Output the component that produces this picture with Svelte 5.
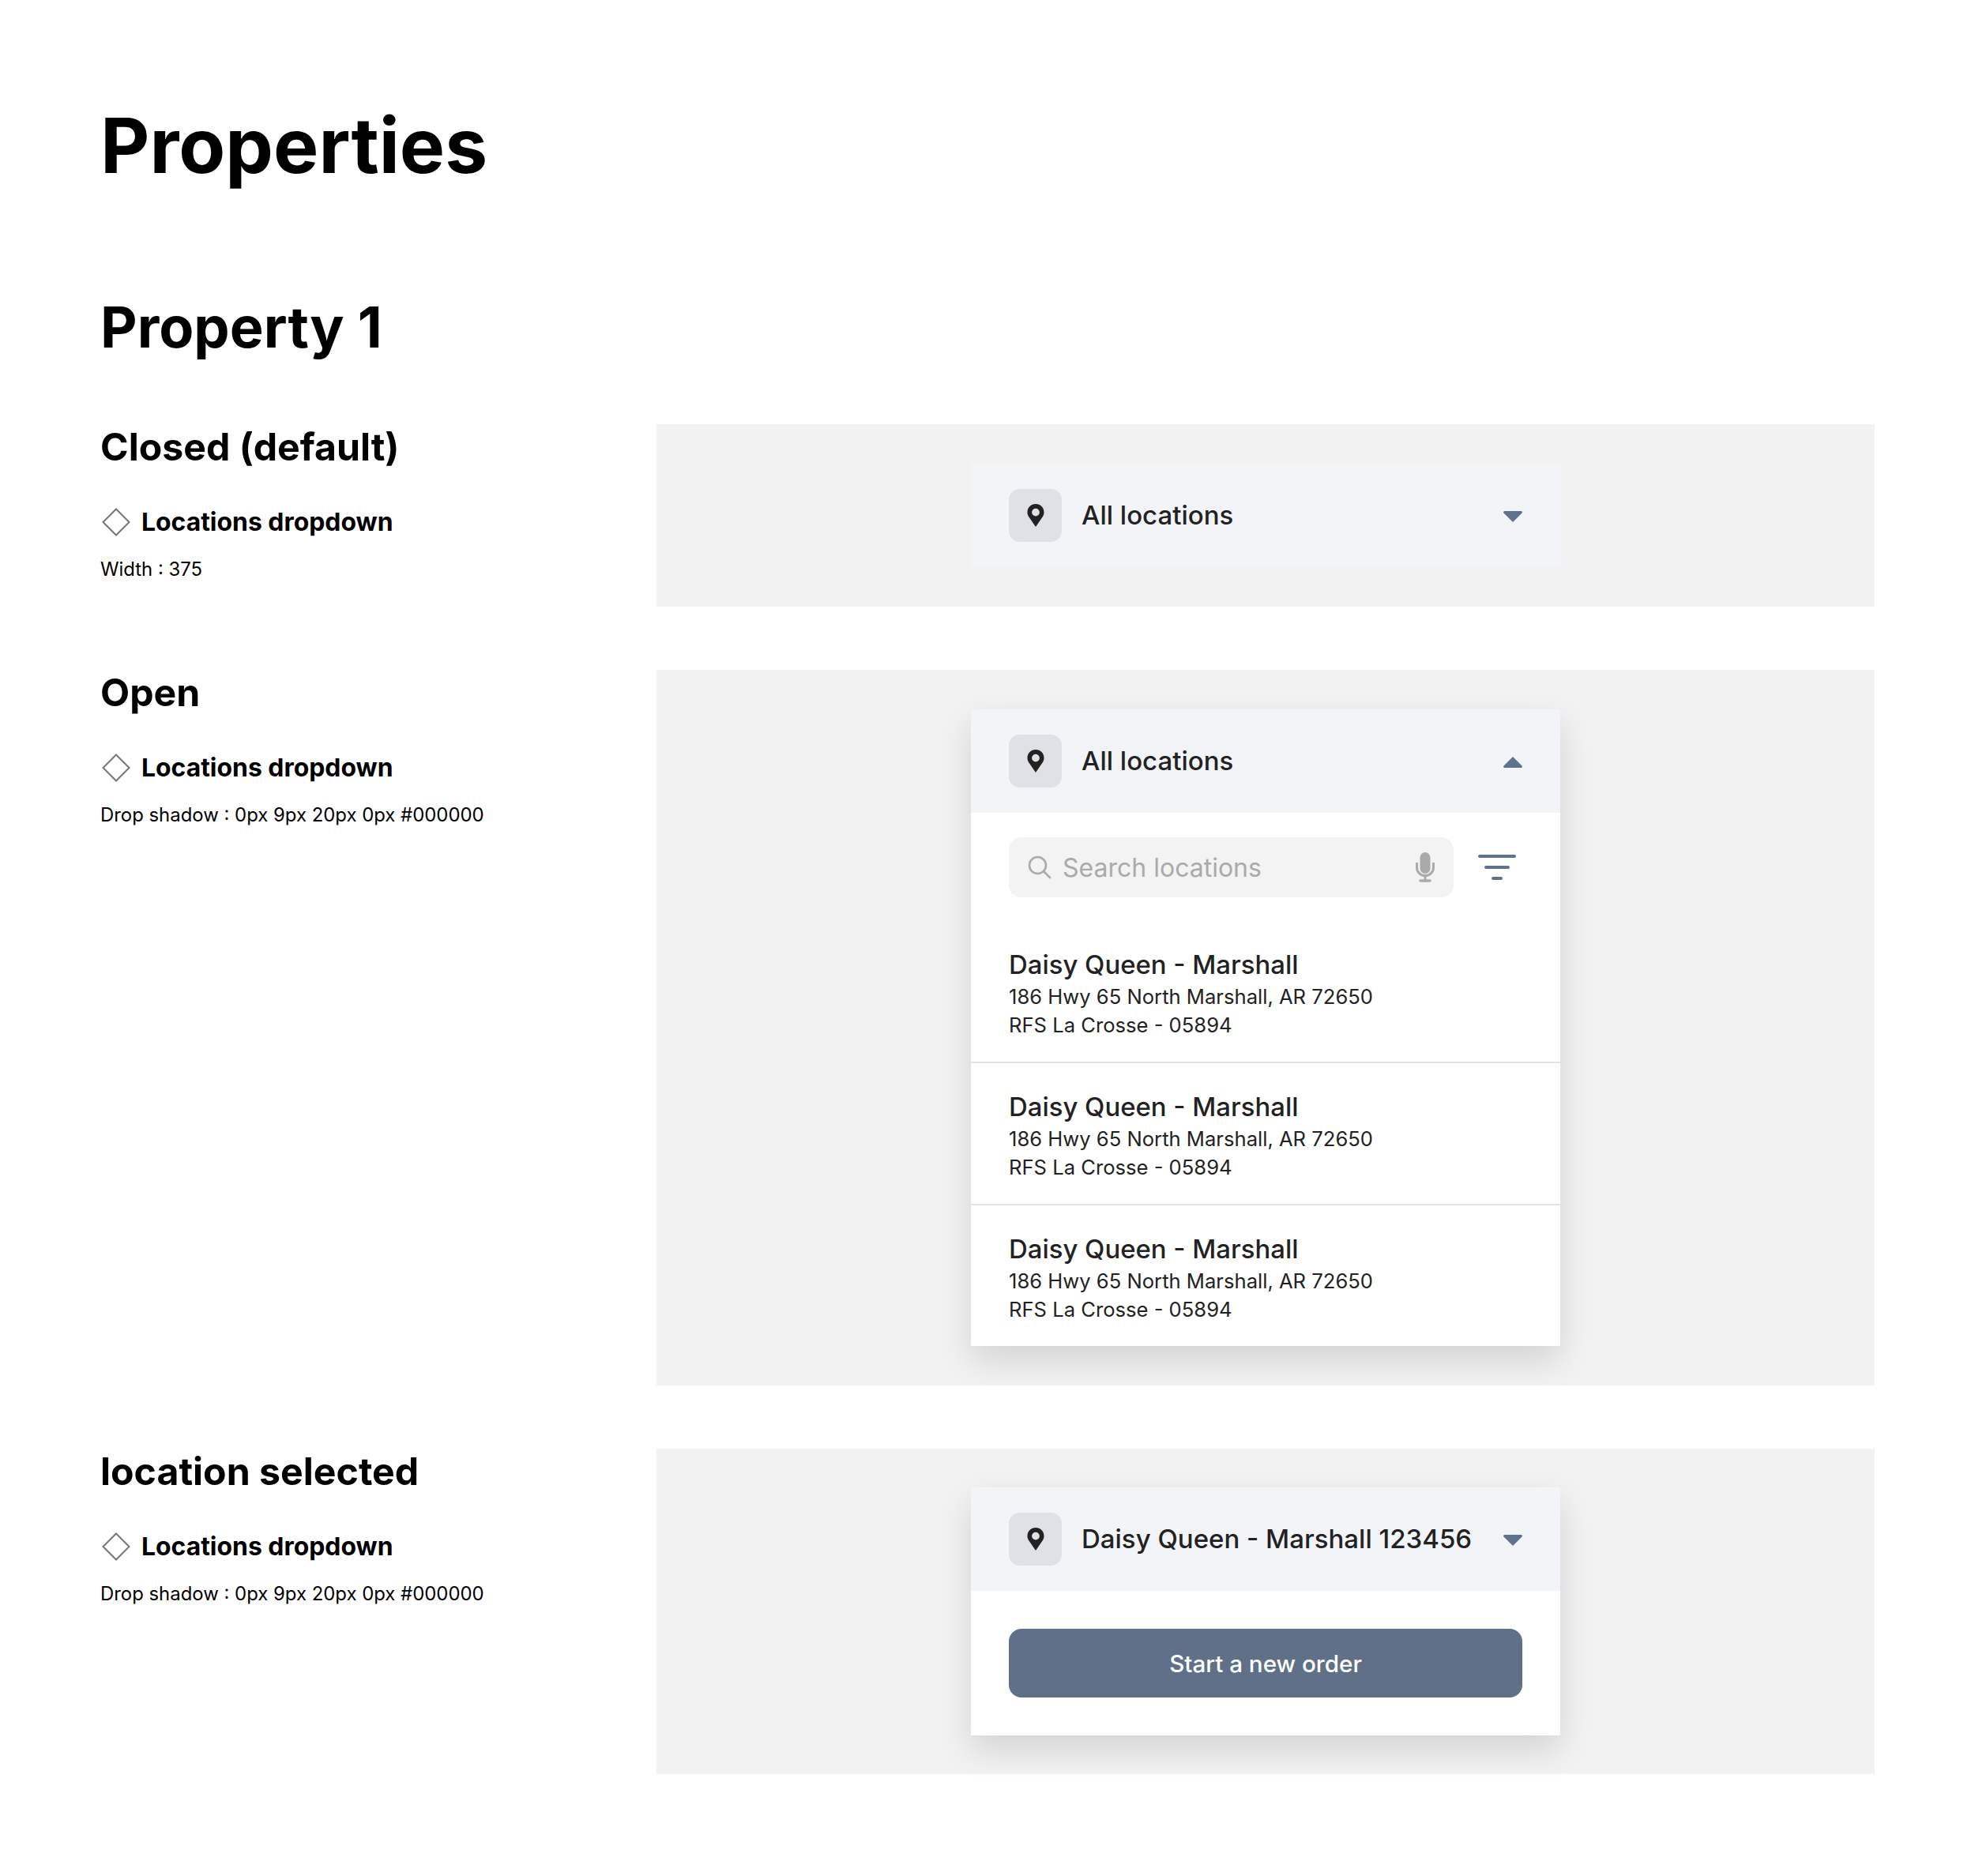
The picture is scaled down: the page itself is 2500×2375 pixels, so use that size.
<script>
  const items = [0, 1, 2];
</script>

{#snippet pin()}
  <span class="tile">
    <svg width="22" height="29" viewBox="0 0 22 29">
      <path fill-rule="evenodd" fill="#222" d="M11 0C5 0 .5 4.6.5 10.4c0 2 .5 3.700 1.400 5.300L11 29l9.100-13.300c.9-1.600 1.400-3.300 1.400-5.300C21.500 4.600 17 0 11 0Zm0 5.700a4.900 4.900 0 1 1 0 9.800 4.900 4.900 0 0 1 0-9.800Z" />
    </svg>
  </span>
{/snippet}

{#snippet caret(up)}
  <svg class="caret" width="24" height="14" viewBox="0 0 24 14">
    {#if up}
      <path fill="#5f718c" d="M12 0 23.500 11.500c.8.800.3 2.500-1 2.500H1.500C.2 14-.3 12.300.5 11.500Z" />
    {:else}
      <path fill="#5f718c" d="M12 14 23.500 2.500C24.300 1.700 23.800 0 22.500 0H1.500C.2 0-.3 1.700.5 2.500Z" />
    {/if}
  </svg>
{/snippet}

{#snippet label(title, note)}
  <div class="label">
    <h3>{title}</h3>
    <div class="comp">
      <svg width="36" height="36" viewBox="0 0 36 36">
        <path d="M18 1.500 34.500 18 18 34.500 1.500 18Z" fill="none" stroke="#757575" stroke-width="2" />
      </svg>
      <span>Locations dropdown</span>
    </div>
    <p>{note}</p>
  </div>
{/snippet}

<div class="page">
  <h1>Properties</h1>
  <h2>Property 1</h2>

  <section class="row">
    {@render label("Closed (default)", "Width : 375")}
    <div class="panel">
      <div class="card flat">
        <div class="head">
          {@render pin()}
          <span class="value">All locations</span>
          {@render caret(false)}
        </div>
      </div>
    </div>
  </section>

  <section class="row">
    {@render label("Open", "Drop shadow : 0px 9px 20px 0px #000000")}
    <div class="panel">
      <div class="card">
        <div class="head">
          {@render pin()}
          <span class="value">All locations</span>
          {@render caret(true)}
        </div>
        <div class="searchrow">
          <div class="search">
            <svg width="30" height="30" viewBox="0 0 30 30" fill="none" stroke="#aaa" stroke-width="2.600" stroke-linecap="round">
              <circle cx="12.500" cy="12.500" r="10.500" />
              <path d="M20.500 20.500 28 28" />
            </svg>
            <span>Search locations</span>
            <svg class="mic" width="24" height="38" viewBox="0 0 24 38" fill="none">
              <rect x="5.500" y="0" width="13" height="27" rx="6.500" fill="#aaa" />
              <path d="M1.500 13v6.500c0 5.500 4.700 10 10.500 10s10.500-4.500 10.500-10V13" stroke="#aaa" stroke-width="3" />
              <path d="M12 29v7" stroke="#aaa" stroke-width="3" />
              <path d="M6 36h12" stroke="#aaa" stroke-width="3.400" stroke-linecap="round" />
            </svg>
          </div>
          <svg width="48" height="32" viewBox="0 0 48 32" fill="none" stroke="#5f718c" stroke-width="4" stroke-linecap="round">
            <path d="M2 2h44M10 16h28M19 30h10" />
          </svg>
        </div>
        {#each items as i}
          <div class="item" class:first={i === 0} class:last={i === 2}>
            <strong>Daisy Queen - Marshall</strong>
            <span>186 Hwy 65 North Marshall, AR 72650</span>
            <span>RFS La Crosse - 05894</span>
          </div>
        {/each}
      </div>
    </div>
  </section>

  <section class="row">
    {@render label("location selected", "Drop shadow : 0px 9px 20px 0px #000000")}
    <div class="panel selected">
      <div class="card">
        <div class="head">
          {@render pin()}
          <span class="value">Daisy Queen - Marshall 123456</span>
          {@render caret(false)}
        </div>
        <div class="action">
          <button>Start a new order</button>
        </div>
      </div>
    </div>
  </section>
</div>

<style>
  :global(body) {
    background: #fff;
  }

  .page {
    width: 2500px;
    height: 2375px;
    box-sizing: border-box;
    padding: 126px 127px 0;
    font-family: Inter, "Liberation Sans", sans-serif;
    color: #000;
  }

  h1 {
    margin: 0;
    font-size: 96.300px;
    line-height: 116px;
    font-weight: 700;
  }

  h2 {
    margin: 128px 0 79px;
    font-size: 72px;
    line-height: 88px;
    font-weight: 700;
  }

  .row {
    display: flex;
    margin-bottom: 80px;
  }

  .label {
    width: 704px;
    flex: none;
  }

  h3 {
    margin: 0;
    font-size: 48.200px;
    line-height: 58px;
    font-weight: 700;
  }

  .comp {
    display: flex;
    align-items: center;
    gap: 14px;
    margin-top: 46px;
    padding-left: 2px;
    font-size: 31.900px;
    line-height: 40px;
    font-weight: 700;
  }

  .label p {
    margin: 25px 0 0;
    font-size: 23.900px;
    line-height: 30px;
  }

  .panel {
    flex: 1;
    background: #f2f2f2;
    padding: 50px 0;
    display: flex;
    justify-content: center;
    align-items: flex-start;
  }

  .panel.selected {
    padding: 49px 0;
  }

  .card {
    width: 746px;
    background: #fff;
    box-shadow: 0 18px 40px rgba(0, 0, 0, 0.13);
    color: #222;
  }

  .card.flat {
    box-shadow: none;
  }

  .head {
    height: 131px;
    box-sizing: border-box;
    padding: 0 48px;
    background: #f3f4f8;
    display: flex;
    align-items: center;
  }

  .caret {
    margin-top: 3px;
  }

  .tile {
    width: 67px;
    height: 67px;
    flex: none;
    border-radius: 14px;
    background: #dfe1e6;
    display: flex;
    align-items: center;
    justify-content: center;
  }

  .value {
    flex: 1;
    margin: 0 0 1px 25px;
    font-size: 33px;
    font-weight: 500;
    white-space: nowrap;
  }

  .searchrow {
    display: flex;
    align-items: center;
    gap: 31px;
    padding: 31px 48px 0;
  }

  .search {
    width: 563px;
    height: 76px;
    box-sizing: border-box;
    padding: 0 24px;
    border-radius: 16px;
    background: #f3f3f3;
    display: flex;
    align-items: center;
    gap: 14px;
    font-size: 32px;
    color: #aaa;
  }

  .search span {
    flex: 1;
  }

  .item {
    height: 180px;
    box-sizing: border-box;
    padding: 32px 48px 0;
    border-bottom: 2px solid #e4e4e4;
    display: flex;
    flex-direction: column;
    font-size: 25.600px;
    line-height: 35.500px;
  }

  .item.first {
    height: 210px;
    padding-top: 62px;
  }

  .item.last {
    height: 178px;
    border-bottom: 0;
  }

  .item strong {
    font-size: 32.900px;
    font-weight: 500;
    line-height: 46px;
  }

  .action {
    padding: 48px;
  }

  button {
    display: block;
    width: 100%;
    height: 87px;
    border: 0;
    border-radius: 16px;
    background: #617089;
    color: #fff;
    font: 500 29.600px Inter, "Liberation Sans", sans-serif;
  }
</style>
